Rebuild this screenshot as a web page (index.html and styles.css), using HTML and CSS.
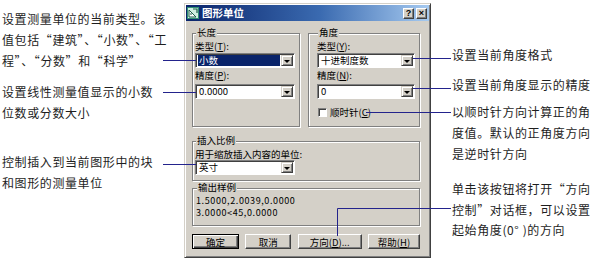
FILE: index.html
```html
<!DOCTYPE html>
<html lang="zh-CN">
<head>
<meta charset="utf-8">
<title>图形单位</title>
<link rel="stylesheet" href="styles.css">
</head>
<body>
<div class="page">
  <div class="notes-left">
    <p class="note">设置测量单位的当前类型。该<br>值包括“建筑”、“小数”、“工<br>程”、“分数”和“科学”</p>
    <p class="note n2">设置线性测量值显示的小数<br>位数或分数大小</p>
    <p class="note n3">控制插入到当前图形中的块<br>和图形的测量单位</p>
  </div>

  <div class="dialog">
    <div class="titlebar">
      <svg class="app-icon" width="12" height="12" viewBox="0 0 12 12">
        <rect x="0" y="0" width="12" height="12" fill="#2f8f73"/>
        <rect x="1" y="1" width="10" height="10" fill="#cfeee0"/>
        <path d="M2 10 L2 3 L9 10 Z" fill="#fff" stroke="#1d5e4a" stroke-width="1"/>
        <path d="M6 2 H10 V6" fill="none" stroke="#1d5e4a" stroke-width="1.2"/>
        <path d="M3 7 H5" stroke="#1d5e4a" stroke-width="1"/>
      </svg>
      <span class="title">图形单位</span>
      <div class="tb-buttons">
        <span class="tb-btn">?</span>
        <span class="tb-btn">×</span>
      </div>
    </div>

    <div class="dlg-body">
      <div class="row">
        <div class="group g-len">
          <div class="gtitle">长度</div>
          <div class="lbl">类型(<u>T</u>):</div>
          <div class="combo">
            <span class="combo-text sel">小数</span>
            <span class="combo-btn"><i class="tri"></i></span>
          </div>
          <div class="lbl lbl2">精度(<u>P</u>):</div>
          <div class="combo combo2">
            <span class="combo-text">0.0000</span>
            <span class="combo-btn"><i class="tri"></i></span>
          </div>
        </div>
        <div class="group g-ang">
          <div class="gtitle">角度</div>
          <div class="lbl">类型(<u>Y</u>):</div>
          <div class="combo">
            <span class="combo-text">十进制度数</span>
            <span class="combo-btn"><i class="tri"></i></span>
          </div>
          <div class="lbl lbl2">精度(<u>N</u>):</div>
          <div class="combo combo2">
            <span class="combo-text">0</span>
            <span class="combo-btn"><i class="tri"></i></span>
          </div>
          <div class="check-row">
            <span class="checkbox"></span>
            <span>顺时针(<u>C</u>)</span>
          </div>
        </div>
      </div>

      <div class="group g-ins">
        <div class="gtitle">插入比例</div>
        <div class="lbl lbl-ins">用于缩放插入内容的单位:</div>
        <div class="combo combo-ins">
          <span class="combo-text">英寸</span>
          <span class="combo-btn"><i class="tri"></i></span>
        </div>
      </div>

      <div class="group g-out">
        <div class="gtitle">输出样例</div>
        <div class="sample">1.5000,2.0039,0.0000<br>3.0000&lt;45,0.0000</div>
      </div>

      <div class="buttons">
        <span class="btn btn-default b-ok">确定</span>
        <span class="btn b-cancel">取消</span>
        <span class="btn b-dir">方向(<u>D</u>)...</span>
        <span class="btn b-help">帮助(<u>H</u>)</span>
      </div>
    </div>
  </div>

  <div class="notes-right">
    <p class="note">设置当前角度格式</p>
    <p class="note r2">设置当前角度显示的精度</p>
    <p class="note r3">以顺时针方向计算正的角<br>度值。默认的正角度方向<br>是逆时针方向</p>
    <p class="note r4">单击该按钮将打开“方向<br>控制”对话框，可以设置<br>起始角度(0°&nbsp;)的方向</p>
  </div>

  <svg class="connectors" width="596" height="262" viewBox="0 0 596 262">
    <path d="M163 60.5 H196"/>
    <path d="M163 92.5 H196"/>
    <path d="M163 164.5 H196"/>
    <path d="M413 58.5 H451"/>
    <path d="M413 88.5 H451"/>
    <path d="M366 112.5 H451"/>
    <path d="M337.5 236 V208.5 H451"/>
  </svg>
</div>
</body>
</html>
```

FILE: styles.css
```css
html, body {
  margin: 0;
  padding: 0;
  background: #ffffff;
}

.page {
  position: relative;
  width: 596px;
  height: 262px;
  display: flex;
  overflow: hidden;
  font-family: "Noto Sans CJK SC", "Noto Sans", sans-serif;
}

/* ---------- annotations ---------- */
.notes-left {
  flex: none;
  width: 184px;
  box-sizing: border-box;
  padding: 8px 0 0 2px;
}

.notes-right {
  flex: none;
  width: 165px;
  box-sizing: border-box;
  padding: 44px 0 0 21px;
}

.note {
  margin: 0;
  font-size: 12px;
  line-height: 21px;
  letter-spacing: 0.6px;
  color: #1e1e1e;
  white-space: nowrap;
}

.n2 { margin-top: 10px; }
.n3 { margin-top: 28px; }
.r2 { margin-top: 9px; }
.r3 { margin-top: 6px; }
.r4 { margin-top: 15px; line-height: 20.5px; }

/* ---------- dialog ---------- */
.dialog {
  flex: none;
  width: 247px;
  height: 255px;
  margin-top: 3px;
  box-sizing: border-box;
  background: #d4d0c8;
  border: 1px solid;
  border-color: #d4d0c8 #404040 #404040 #d4d0c8;
  box-shadow: inset 1px 1px 0 #ffffff, inset -1px -1px 0 #808080;
  padding: 1px;
  display: flex;
  flex-direction: column;
  font-size: 9.5px;
  color: #000;
}

.titlebar {
  height: 16px;
  flex: none;
  display: flex;
  align-items: center;
  padding: 0 2px 0 1px;
  background: linear-gradient(90deg, #0a246a 0%, #3a6ab0 55%, #a6caf0 100%);
}

.app-icon {
  flex: none;
  display: block;
}

.title {
  margin-left: 3px;
  color: #ffffff;
  font-weight: bold;
  font-size: 10.5px;
  line-height: 16px;
}

.tb-buttons {
  margin-left: auto;
  display: flex;
  gap: 2px;
}

.tb-btn {
  width: 11px;
  height: 11px;
  box-sizing: border-box;
  background: #d4d0c8;
  border: 1px solid;
  border-color: #ffffff #404040 #404040 #ffffff;
  box-shadow: inset -1px -1px 0 #808080;
  display: flex;
  align-items: center;
  justify-content: center;
  font-family: "Liberation Sans", sans-serif;
  font-weight: bold;
  font-size: 9px;
  line-height: 9px;
  color: #000;
}

.dlg-body {
  flex: 1;
  display: flex;
  flex-direction: column;
  padding: 12px 9px 0 6px;
}

.row {
  display: flex;
  gap: 8px;
}

.group {
  box-sizing: border-box;
  border: 1px solid #808080;
  box-shadow: 1px 1px 0 #ffffff, inset 1px 1px 0 #ffffff;
}

.gtitle {
  width: max-content;
  margin: -7px 0 0 1px;
  padding: 0 1px;
  background: #d4d0c8;
  line-height: 11px;
}

.g-len {
  width: 108px;
  padding: 0 4px 0 2px;
}

.g-ang {
  width: 112px;
  padding: 0 4px 7px 8px;
}

.g-ins {
  margin-top: 14px;
  padding: 0 4px 5px 2px;
}

.g-out {
  margin-top: 7px;
  padding: 0 4px 6px 3px;
}

.lbl {
  margin-top: 2px;
  line-height: 13px;
}

.lbl2 { margin-top: 1px; }

.lbl-ins {
  line-height: 12px;
}

u {
  text-decoration: underline;
  text-underline-offset: 1px;
}

/* combo box */
.combo {
  height: 15px;
  box-sizing: border-box;
  display: flex;
  background: #ffffff;
  border: 1px solid;
  border-color: #808080 #ffffff #ffffff #808080;
  box-shadow: inset 1px 1px 0 #404040;
  padding: 1px 1px 1px 2px;
}

.combo2 { margin-top: 2px; }

.combo-ins {
  width: 100px;
}

.combo-text {
  flex: 1;
  line-height: 11px;
  padding-left: 1px;
  white-space: nowrap;
}

.combo-text.sel {
  background: #0a246a;
  color: #ffffff;
  margin-right: 1px;
}

.combo-btn {
  flex: none;
  width: 12px;
  height: 11px;
  box-sizing: border-box;
  background: #d4d0c8;
  border: 1px solid;
  border-color: #d4d0c8 #404040 #404040 #d4d0c8;
  box-shadow: inset 1px 1px 0 #ffffff, inset -1px -1px 0 #808080;
  display: flex;
  align-items: center;
  justify-content: center;
}

.tri {
  display: block;
  width: 0;
  height: 0;
  border-top: 3px solid #000;
  border-left: 3px solid transparent;
  border-right: 3px solid transparent;
  margin-top: 1px;
}

/* checkbox */
.check-row {
  margin-top: 6px;
  height: 14px;
  display: flex;
  align-items: center;
  gap: 3px;
  padding-left: 1px;
}

.checkbox {
  width: 9px;
  height: 9px;
  box-sizing: border-box;
  background: #ffffff;
  border: 1px solid;
  border-color: #808080 #ffffff #ffffff #808080;
  box-shadow: inset 1px 1px 0 #404040;
}

.sample {
  margin-top: 2px;
  line-height: 12px;
  font-size: 9px;
  letter-spacing: 0.6px;
  white-space: nowrap;
}

/* buttons */
.buttons {
  margin-top: 8px;
  display: flex;
  justify-content: space-between;
}

.btn {
  height: 15px;
  box-sizing: border-box;
  border: 1px solid;
  border-color: #ffffff #404040 #404040 #ffffff;
  box-shadow: inset -1px -1px 0 #808080;
  display: flex;
  align-items: center;
  justify-content: center;
  white-space: nowrap;
}

.btn-default {
  border-color: #000000;
  box-shadow: inset 1px 1px 0 #ffffff, inset -1px -1px 0 #404040, inset -2px -2px 0 #808080;
}

.b-ok { width: 47px; }
.b-cancel { width: 46px; }
.b-dir { width: 64px; }
.b-help { width: 52px; }

/* connector lines overlay */
.connectors {
  position: absolute;
  left: 0;
  top: 0;
  pointer-events: none;
}

.connectors path {
  fill: none;
  stroke: #23238c;
  stroke-width: 1;
}
```
